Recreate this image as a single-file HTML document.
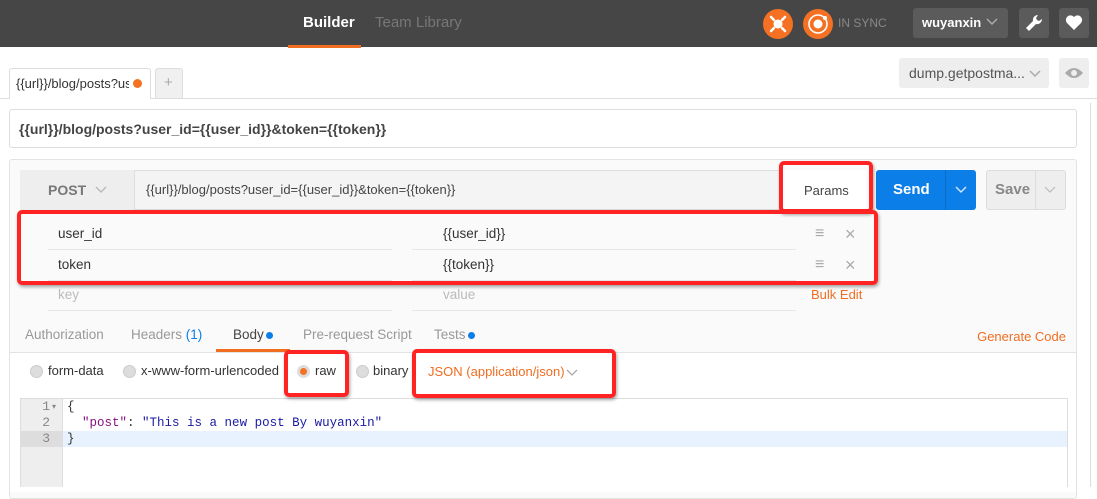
<!DOCTYPE html>
<html><head><style>
*{box-sizing:border-box;margin:0;padding:0}
body{width:1097px;height:487px;overflow:hidden;background:#fff;font-family:"Liberation Sans",sans-serif;font-size:13px;color:#333;position:relative}
.a{position:absolute}
.red{position:absolute;border:4px solid #ff2323;border-radius:5px;box-shadow:1px 2px 3px rgba(0,0,0,.35)}
.t{position:absolute;white-space:nowrap}
.o{color:#f06d22}
.line{position:absolute;height:1px;background:#e6e6e6}
.radio{position:absolute;width:13px;height:13px;border-radius:50%;background:#ddd;border:1px solid #ccc}
</style></head><body>
<div class="a" style="left:0;top:0;width:1097px;height:47px;background:#464646"></div>
<div class="t" style="left:303px;top:14px;color:#fff;font-weight:bold;font-size:15px">Builder</div>
<div class="a" style="left:288px;top:45px;width:73px;height:3px;background:#f06d22"></div>
<div class="t" style="left:375px;top:14px;color:#777;font-size:15px">Team Library</div>
<div class="a" style="left:763px;top:9px;width:30px;height:30px;border-radius:50%;background:#f47023"></div>
<svg class="a" style="left:763px;top:9px" width="30" height="30"><circle cx="15" cy="15" r="4.5" fill="#fff"/><g stroke="#fff" stroke-width="2.5" stroke-linecap="round"><line x1="8" y1="8" x2="11" y2="11"/><line x1="22" y1="8" x2="19" y2="11"/><line x1="8" y1="22" x2="11" y2="19"/><line x1="22" y1="22" x2="19" y2="19"/></g></svg>
<div class="a" style="left:803px;top:9px;width:30px;height:30px;border-radius:50%;background:#f47023"></div>
<svg class="a" style="left:803px;top:9px" width="30" height="30"><circle cx="15" cy="15" r="9" fill="none" stroke="#fff" stroke-width="1.6"/><circle cx="15" cy="15" r="4.5" fill="#fff"/><circle cx="22" cy="9" r="2" fill="#fff"/></svg>
<div class="t" style="left:838px;top:16px;color:#888;font-size:12px">IN SYNC</div>
<div class="a" style="left:913px;top:8px;width:95px;height:30px;background:#5b5b5b;border-radius:3px"></div>
<div class="t" style="left:922px;top:15px;color:#fff;font-weight:bold;font-size:13px">wuyanxin</div>
<svg class="a" style="left:986px;top:18px" width="12" height="8"><path d="M1 1l5 5 5-5" fill="none" stroke="#aaa" stroke-width="1.5"/></svg>
<div class="a" style="left:1019px;top:8px;width:30px;height:30px;background:#5b5b5b;border-radius:3px"></div>
<svg class="a" style="left:1024px;top:13px" width="20" height="20"><path d="M14 2a5 5 0 0 0-5 6L2 15l3 3 7-7a5 5 0 0 0 6-5l-3 2-2-1-1-2z" fill="#fff"/></svg>
<div class="a" style="left:1059px;top:8px;width:30px;height:30px;background:#5b5b5b;border-radius:3px"></div>
<svg class="a" style="left:1065px;top:14px" width="18" height="17"><path d="M9 16L2 9a4 4 0 0 1 7-6 4 4 0 0 1 7 6z" fill="#fff"/></svg>
<div class="line" style="left:0;top:98px;width:1097px;background:#ddd"></div>
<div class="a" style="left:9px;top:68px;width:142px;height:31px;background:#fff;border:1px solid #ddd;border-bottom:none;border-radius:3px 3px 0 0"></div>
<div class="t" style="left:16px;top:76px;width:113px;overflow:hidden;font-size:13px">{{url}}/blog/posts?user_id</div>
<div class="a" style="left:133px;top:79px;width:9px;height:9px;border-radius:50%;background:#f47023"></div>
<div class="a" style="left:155px;top:68px;width:28px;height:30px;background:#f0f0f0;border:1px solid #ddd;border-bottom:none;border-radius:3px 3px 0 0"></div>
<div class="t" style="left:164px;top:74px;color:#aaa;font-size:15px">+</div>
<div class="a" style="left:899px;top:58px;width:150px;height:30px;background:#eee;border-radius:3px"></div>
<div class="t" style="left:909px;top:65px;color:#555;font-size:14px">dump.getpostma...</div>
<svg class="a" style="left:1029px;top:70px" width="12" height="8"><path d="M1 1l5 5 5-5" fill="none" stroke="#aaa" stroke-width="1.5"/></svg>
<div class="a" style="left:1059px;top:58px;width:30px;height:30px;background:#eee;border-radius:3px"></div>
<svg class="a" style="left:1064px;top:66px" width="20" height="14"><path d="M1 7q9-10 18 0q-9 10-18 0z" fill="#aaa"/><circle cx="10" cy="7" r="3" fill="#eee"/></svg>
<div class="a" style="left:1090px;top:103px;width:1px;height:384px;background:#ddd"></div>
<div class="a" style="left:9px;top:109px;width:1068px;height:39px;border:1px solid #ddd;border-radius:3px"></div>
<div class="t" style="left:19px;top:121px;font-weight:bold;font-size:14px;color:#444">{{url}}/blog/posts?user_id={{user_id}}&amp;token={{token}}</div>
<div class="a" style="left:9px;top:159px;width:1068px;height:340px;background:#fafafa;border:1px solid #e3e3e3;border-radius:3px"></div>
<div class="a" style="left:20px;top:170px;width:846px;height:40px;border:1px solid #ddd;border-radius:3px;background:#f4f4f4"></div>
<div class="a" style="left:20px;top:170px;width:115px;height:40px;background:#eee;border-right:1px solid #ddd"></div>
<div class="t" style="left:48px;top:182px;font-weight:bold;color:#777;font-size:14px">POST</div>
<svg class="a" style="left:95px;top:186px" width="12" height="8"><path d="M1 1l5 5 5-5" fill="none" stroke="#bbb" stroke-width="1.5"/></svg>
<div class="t" style="left:146px;top:182px;font-size:13px;color:#444">{{url}}/blog/posts?user_id={{user_id}}&amp;token={{token}}</div>
<div class="a" style="left:782px;top:170px;width:84px;height:40px;background:#fff;border-left:1px solid #ddd"></div>
<div class="t" style="left:804px;top:183px;font-size:13px;color:#444444">Params</div>
<div class="a" style="left:876px;top:170px;width:100px;height:40px;background:#0b7ee8;border-radius:3px"></div>
<div class="a" style="left:945px;top:170px;width:1px;height:40px;background:#0a6cc7"></div>
<div class="t" style="left:893px;top:181px;color:#fff;font-weight:bold;font-size:15px">Send</div>
<svg class="a" style="left:955px;top:186px" width="12" height="8"><path d="M1 1l5 5 5-5" fill="none" stroke="#cfe4fb" stroke-width="1.5"/></svg>
<div class="a" style="left:986px;top:170px;width:80px;height:40px;background:#eee;border:1px solid #ddd;border-radius:3px"></div>
<div class="a" style="left:1035px;top:170px;width:1px;height:40px;background:#ddd"></div>
<div class="t" style="left:995px;top:181px;color:#888;font-weight:bold;font-size:15px">Save</div>
<svg class="a" style="left:1044px;top:186px" width="12" height="8"><path d="M1 1l5 5 5-5" fill="none" stroke="#bbb" stroke-width="1.2"/></svg>
<div class="t" style="left:58px;top:226px;font-size:13.5px">user_id</div>
<div class="t" style="left:443px;top:226px;font-size:13.5px">{{user_id}}</div>
<div class="t" style="left:58px;top:257px;font-size:13.5px">token</div>
<div class="t" style="left:443px;top:257px;font-size:13.5px">{{token}}</div>
<div class="t" style="left:58px;top:287px;color:#bbb;font-size:13.5px">key</div>
<div class="t" style="left:443px;top:287px;color:#bbb;font-size:13.5px">value</div>
<div class="line" style="left:48px;top:249px;width:344px"></div><div class="line" style="left:412px;top:249px;width:384px"></div>
<div class="line" style="left:48px;top:280px;width:344px"></div><div class="line" style="left:412px;top:280px;width:384px"></div>
<div class="line" style="left:48px;top:310px;width:344px"></div><div class="line" style="left:412px;top:310px;width:384px"></div>
<div class="t" style="left:815px;top:225px;color:#aaa;font-size:16px;font-weight:bold">≡</div>
<div class="t" style="left:845px;top:224px;color:#aaa;font-size:18px">×</div>
<div class="t" style="left:815px;top:256px;color:#aaa;font-size:16px;font-weight:bold">≡</div>
<div class="t" style="left:845px;top:255px;color:#aaa;font-size:18px">×</div>
<div class="t o" style="left:811px;top:287px;font-size:13px">Bulk Edit</div>
<div class="t" style="left:25px;top:327px;color:#999;font-size:13.5px">Authorization</div>
<div class="t" style="left:131px;top:327px;color:#999;font-size:13.5px">Headers <span style="color:#0b7ee8">(1)</span></div>
<div class="t" style="left:233px;top:327px;color:#444;font-size:13.5px">Body</div>
<div class="a" style="left:266px;top:332px;width:7px;height:7px;border-radius:50%;background:#0b7ee8"></div>
<div class="t" style="left:303px;top:327px;color:#999;font-size:13.5px">Pre-request Script</div>
<div class="t" style="left:434px;top:327px;color:#999;font-size:13.5px">Tests</div>
<div class="a" style="left:468px;top:332px;width:7px;height:7px;border-radius:50%;background:#0b7ee8"></div>
<div class="t o" style="right:31px;top:329px;font-size:13px">Generate Code</div>
<div class="a" style="left:10px;top:352px;width:1066px;height:140px;background:#fff;border-top:1px solid #e3e3e3"></div>
<div class="a" style="left:216px;top:349px;width:74px;height:3px;background:#f06d22"></div>
<div class="radio" style="left:30px;top:365px"></div><div class="t" style="left:48px;top:363px;font-size:13px">form-data</div>
<div class="radio" style="left:123px;top:365px"></div><div class="t" style="left:141px;top:363px;font-size:13px">x-www-form-urlencoded</div>
<div class="radio" style="left:297px;top:365px;background:#f47023;border:3px solid #ddd"></div><div class="t" style="left:315px;top:363px;font-size:13px">raw</div>
<div class="radio" style="left:356px;top:365px"></div><div class="t" style="left:373px;top:363px;font-size:13px">binary</div>
<div class="t o" style="left:428px;top:364px;font-size:13px">JSON (application/json)</div>
<svg class="a" style="left:566px;top:369px" width="12" height="8"><path d="M1 1l5 5 5-5" fill="none" stroke="#aaa" stroke-width="1.3"/></svg>
<div class="a" style="left:20px;top:398px;width:1048px;height:89px;border:1px solid #ddd;border-bottom:none"></div>
<div class="a" style="left:21px;top:399px;width:42px;height:88px;background:#eee;border-right:1px solid #ddd"></div>
<div class="a" style="left:21px;top:431px;width:42px;height:16px;background:#ddd"></div>
<div class="a" style="left:63px;top:431px;width:1004px;height:16px;background:#e8f2fe"></div>
<div style="position:absolute;left:22px;top:399px;font-family:'Liberation Mono',monospace;font-size:13px;line-height:16px;color:#888;text-align:right;width:28px">1<br>2<br>3</div>
<div class="t" style="left:52px;top:399px;color:#888;font-size:8px;line-height:16px">▾</div>
<div style="position:absolute;left:67px;top:399px;font-family:'Liberation Mono',monospace;font-size:12.5px;line-height:16px;color:#333;white-space:pre">{
  <span style="color:#881280">"post"</span>: <span style="color:#1a1aa6">"This is a new post By wuyanxin"</span>
}</div>
<div class="red" style="left:779px;top:161px;width:94px;height:52px"></div>
<div class="red" style="left:17px;top:210px;width:861px;height:75px"></div>
<div class="red" style="left:284px;top:350px;width:65px;height:47px"></div>
<div class="red" style="left:412px;top:349px;width:204px;height:49px"></div>
</body></html>
